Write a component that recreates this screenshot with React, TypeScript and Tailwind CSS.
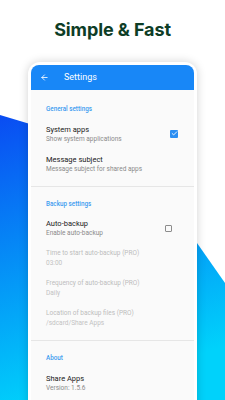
import { ArrowLeft, Check } from 'lucide-react';

const font = { fontFamily: 'Roboto, "Noto Sans", sans-serif' };

function SectionHeader({ label }: { label: string }) {
  return <div className="h-[8px] text-[6.3px] leading-[8px] font-medium text-[#3d9cf0]">{label}</div>;
}

function Item({
  title,
  subtitle,
  disabled,
  right,
}: {
  title: string;
  subtitle: string;
  disabled?: boolean;
  right?: React.ReactNode;
}) {
  return (
    <div className="flex items-center">
      <div className="flex min-w-0 flex-1 flex-col gap-[1px]">
        <div
          className={`h-[9px] leading-[9px] ${disabled ? 'text-[6.5px] text-[#bdbdbd]' : 'text-[7.5px] text-[#212121]'}`}
        >
          {title}
        </div>
        <div className={`h-[8px] text-[6.5px] leading-[8px] ${disabled ? 'text-[#c2c2c2]' : 'text-[#8a8a8a]'}`}>
          {subtitle}
        </div>
      </div>
      {right}
    </div>
  );
}

export default function App() {
  return (
    <div className="relative h-[400px] w-[225px] overflow-hidden bg-white" style={font}>
      <svg className="absolute inset-0" width="225" height="400" viewBox="0 0 225 400">
        <defs>
          <linearGradient id="bg" x1="0" y1="0" x2="0.25" y2="1">
            <stop offset="0" stopColor="#0a4cf2" />
            <stop offset="1" stopColor="#00d2fb" />
          </linearGradient>
        </defs>
        <polygon points="0,115 100,145 197,243 225,283 225,400 0,400" fill="url(#bg)" />
      </svg>

      <div className="relative flex flex-col items-center">
        <div
          className="mt-[19px] text-[18px] leading-[22px] font-bold tracking-[-0.1px] text-[#0e3d26]"
          style={{ fontFamily: 'Inter, "Noto Sans", sans-serif' }}
        >
          Simple &amp; Fast
        </div>

        <div className="mt-[21px] w-[169px] rounded-t-[12px] bg-white px-[3px] pt-[3px] shadow-[0_0_10px_rgba(0,0,0,0.18)]">
          <div className="flex h-[25px] items-center rounded-t-[8px] bg-[#1887f7] pl-[9px] text-white">
            <ArrowLeft size={9} strokeWidth={2.2} />
            <span className="ml-[15px] text-[9px] leading-[11px]">Settings</span>
          </div>

          <div className="flex h-[400px] flex-col bg-[#fafafa]">
            <div className="flex flex-col px-[15px] pt-[15px] pb-[13px]">
              <SectionHeader label="General settings" />
              <div className="mt-[11.5px] flex flex-col gap-[12px]">
                <Item
                  title="System apps"
                  subtitle="Show system applications"
                  right={
                    <div className="mr-[1px] flex h-[8px] w-[8px] items-center justify-center rounded-[1px] bg-[#2b8ef2]">
                      <Check size={7} strokeWidth={3} className="text-white" />
                    </div>
                  }
                />
                <Item title="Message subject" subtitle="Message subject for shared apps" />
              </div>
            </div>
            <div className="h-px bg-[#e6e6e6]" />

            <div className="flex flex-col px-[15px] pt-[13px] pb-[13px]">
              <SectionHeader label="Backup settings" />
              <div className="mt-[11.5px] flex flex-col gap-[12px]">
                <Item
                  title="Auto-backup"
                  subtitle="Enable auto-backup"
                  right={<div className="mr-[7px] h-[7px] w-[7px] rounded-[1px] border border-[#8c8c8c]" />}
                />
                <Item title="Time to start auto-backup (PRO)" subtitle="03:00" disabled />
                <Item title="Frequency of auto-backup (PRO)" subtitle="Daily" disabled />
                <Item title="Location of backup files (PRO)" subtitle="/sdcard/Share Apps" disabled />
              </div>
            </div>
            <div className="h-px bg-[#e6e6e6]" />

            <div className="flex flex-col px-[15px] pt-[13px] pb-[13px]">
              <SectionHeader label="About" />
              <div className="mt-[11.5px] flex flex-col gap-[12px]">
                <Item title="Share Apps" subtitle="Version: 1.5.6" />
              </div>
            </div>
          </div>
        </div>
      </div>
    </div>
  );
}
